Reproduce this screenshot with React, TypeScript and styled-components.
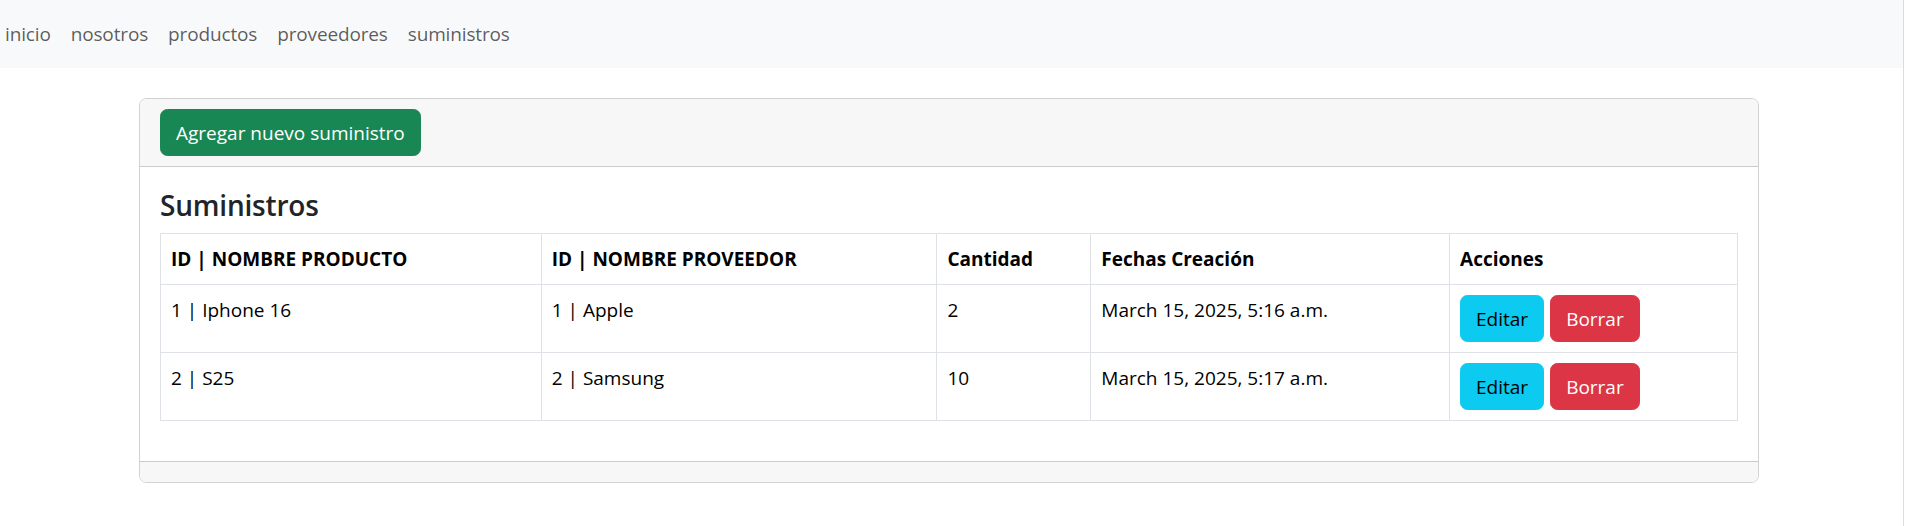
import React from "react";
import styled, { createGlobalStyle } from "styled-components";

const GlobalStyle = createGlobalStyle`
  * {
    box-sizing: border-box;
  }
  body {
    margin: 0;
    background: #fff;
    color: #212529;
    font-family: "Open Sans", "Noto Sans", sans-serif;
    font-size: 19px;
    line-height: 30px;
  }
`;

const Page = styled.div`
  display: flex;
  width: 1908px;
  min-height: 526px;
`;

const Main = styled.div`
  width: 1903px;
`;

const ScrollStrip = styled.div`
  flex: 1;
  border-left: 1px solid #dcdcdc;
`;

const NavBar = styled.nav`
  display: flex;
  align-items: center;
  gap: 20px;
  height: 68px;
  padding-left: 5px;
  background: #f8f9fa;
`;

const NavLink = styled.a`
  color: rgba(0, 0, 0, 0.65);
  letter-spacing: -0.15px;
  text-decoration: none;
  cursor: pointer;
`;

const Container = styled.div`
  width: 1650px;
  margin: 30px 0 0 124px;
  padding: 0 15px;
`;

const Card = styled.div`
  border: 1px solid rgba(0, 0, 0, 0.175);
  border-radius: 7.5px;
  overflow: hidden;
`;

const CardHeader = styled.div`
  padding: 10px 20px;
  background: #f7f7f7;
  border-bottom: 1px solid rgba(0, 0, 0, 0.175);
`;

const CardBody = styled.div`
  padding: 20px;
`;

const CardFooter = styled.div`
  height: 21px;
  background: #f7f7f7;
  border-top: 1px solid rgba(0, 0, 0, 0.175);
`;

const Title = styled.h4`
  margin: 0 0 10px;
  font-size: 28px;
  line-height: 36px;
  font-weight: 600;
  letter-spacing: -0.2px;
`;

const Button = styled.button<{ $variant: "success" | "info" | "danger" }>`
  display: inline-block;
  padding: 7.5px 15px;
  font-family: inherit;
  font-size: 19px;
  line-height: 30px;
  border-radius: 7.5px;
  border: 1px solid transparent;
  cursor: pointer;
  background: ${({ $variant }) =>
    $variant === "success" ? "#198754" : $variant === "info" ? "#0dcaf0" : "#dc3545"};
  border-color: ${({ $variant }) =>
    $variant === "success" ? "#198754" : $variant === "info" ? "#0dcaf0" : "#dc3545"};
  color: ${({ $variant }) => ($variant === "info" ? "#000" : "#fff")};
`;

const Actions = styled.div`
  display: flex;
  gap: 6px;
`;

const Table = styled.table`
  width: 100%;
  margin-bottom: 20px;
  border-collapse: collapse;
  color: #000;
`;

const Th = styled.th<{ $w: number }>`
  width: ${({ $w }) => $w}px;
  padding: 10px;
  text-align: left;
  font-weight: 700;
  border: 1px solid #dee2e6;
`;

const Td = styled.td`
  padding: 10px;
  vertical-align: top;
  border: 1px solid #dee2e6;
`;

const columns = [
  { label: "ID | NOMBRE PRODUCTO", w: 381 },
  { label: "ID | NOMBRE PROVEEDOR", w: 396 },
  { label: "Cantidad", w: 154 },
  { label: "Fechas Creación", w: 359 },
  { label: "Acciones", w: 288 },
];

const rows = [
  { producto: "1 | Iphone 16", proveedor: "1 | Apple", cantidad: 2, fecha: "March 15, 2025, 5:16 a.m." },
  { producto: "2 | S25", proveedor: "2 | Samsung", cantidad: 10, fecha: "March 15, 2025, 5:17 a.m." },
];

export default function App() {
  return (
    <Page>
      <GlobalStyle />
      <Main>
        <NavBar>
          <NavLink>inicio</NavLink>
          <NavLink>nosotros</NavLink>
          <NavLink>productos</NavLink>
          <NavLink>proveedores</NavLink>
          <NavLink>suministros</NavLink>
        </NavBar>
        <Container>
          <Card>
            <CardHeader>
              <Button $variant="success">Agregar nuevo suministro</Button>
            </CardHeader>
            <CardBody>
              <Title>Suministros</Title>
              <Table>
                <thead>
                  <tr>
                    {columns.map((c) => (
                      <Th key={c.label} $w={c.w}>
                        {c.label}
                      </Th>
                    ))}
                  </tr>
                </thead>
                <tbody>
                  {rows.map((r) => (
                    <tr key={r.producto}>
                      <Td>{r.producto}</Td>
                      <Td>{r.proveedor}</Td>
                      <Td>{r.cantidad}</Td>
                      <Td>{r.fecha}</Td>
                      <Td>
                        <Actions>
                          <Button $variant="info">Editar</Button>
                          <Button $variant="danger">Borrar</Button>
                        </Actions>
                      </Td>
                    </tr>
                  ))}
                </tbody>
              </Table>
            </CardBody>
            <CardFooter />
          </Card>
        </Container>
      </Main>
      <ScrollStrip />
    </Page>
  );
}
